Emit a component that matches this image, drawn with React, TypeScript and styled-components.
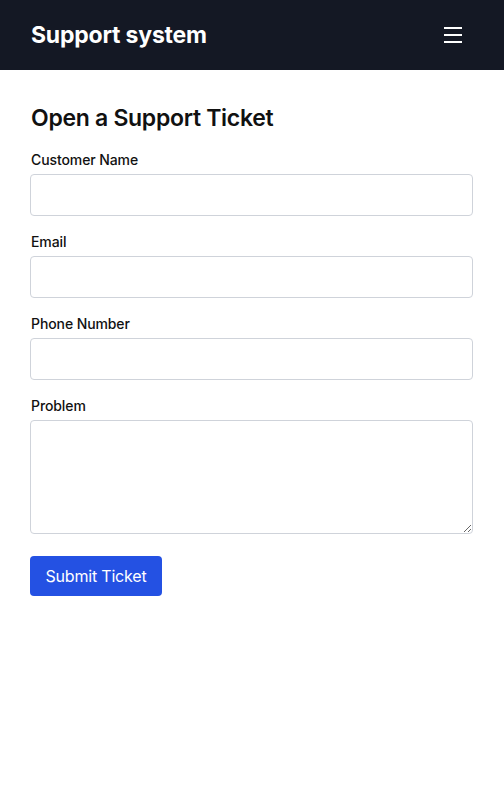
import React from 'react';
import styled, { createGlobalStyle } from 'styled-components';

const GlobalStyle = createGlobalStyle`
  * { box-sizing: border-box; }
  body {
    margin: 0;
    font-family: Inter, "Noto Sans", sans-serif;
    color: #111;
    background: #fff;
  }
`;

const Header = styled.header`
  height: 70px;
  background: #141824;
  display: flex;
  align-items: center;
  justify-content: space-between;
  padding: 0 30px 0 31px;
`;

const Brand = styled.h1`
  margin: 0;
  color: #fff;
  font-size: 23px;
  font-weight: 700;
  letter-spacing: -0.2px;
`;

const MenuButton = styled.button`
  background: none;
  border: 0;
  padding: 0;
  width: 24px;
  height: 24px;
  display: flex;
  align-items: center;
  justify-content: center;
  color: #fff;
  margin-right: 9px;
  cursor: pointer;
`;

const Main = styled.main`
  padding: 32px 31px 30px 30px;
`;

const Title = styled.h2`
  margin: 0 0 16px;
  font-size: 23px;
  line-height: 32px;
  font-weight: 600;
  letter-spacing: -0.3px;
  padding-left: 1px;
`;

const Form = styled.form`
  display: flex;
  flex-direction: column;
`;

const Field = styled.div`
  display: flex;
  flex-direction: column;
  margin-bottom: 16px;
`;

const Label = styled.label`
  font-size: 14px;
  line-height: 20px;
  font-weight: 500;
  letter-spacing: -0.1px;
  margin-bottom: 4px;
  padding-left: 1px;
`;

const Input = styled.input`
  height: 42px;
  width: 100%;
  border: 1px solid #cfd3da;
  border-radius: 4px;
  padding: 8px 12px;
  font: inherit;
  font-size: 16px;
  outline: none;
`;

const TextArea = styled.textarea`
  height: 114px;
  width: 100%;
  border: 1px solid #cfd3da;
  border-radius: 4px;
  padding: 8px 12px;
  font: inherit;
  font-size: 16px;
  line-height: 24px;
  outline: none;
  display: block;
`;

const SubmitButton = styled.button`
  align-self: flex-start;
  margin-top: 6px;
  height: 40px;
  width: 132px;
  padding: 0;
  border: 0;
  border-radius: 4px;
  background: #2451e3;
  color: #fff;
  font-family: Inter, "Noto Sans", sans-serif;
  font-size: 16px;
  letter-spacing: -0.2px;
  cursor: pointer;
`;

const fields = [
  { id: 'name', label: 'Customer Name', type: 'text' },
  { id: 'email', label: 'Email', type: 'email' },
  { id: 'phone', label: 'Phone Number', type: 'tel' },
];

export default function App() {
  return (
    <>
      <GlobalStyle />
      <Header>
        <Brand>Support system</Brand>
        <MenuButton aria-label="Menu">
          <svg width="20" height="16" viewBox="0 0 20 16" fill="none">
            <path d="M1 1h18M1 8h18M1 15h18" stroke="#fff" strokeWidth="2" />
          </svg>
        </MenuButton>
      </Header>
      <Main>
        <Title>Open a Support Ticket</Title>
        <Form onSubmit={(e) => e.preventDefault()}>
          {fields.map((f) => (
            <Field key={f.id}>
              <Label htmlFor={f.id}>{f.label}</Label>
              <Input id={f.id} type={f.type} />
            </Field>
          ))}
          <Field>
            <Label htmlFor="problem">Problem</Label>
            <TextArea id="problem" rows={4} />
          </Field>
          <SubmitButton type="submit">Submit Ticket</SubmitButton>
        </Form>
      </Main>
    </>
  );
}
